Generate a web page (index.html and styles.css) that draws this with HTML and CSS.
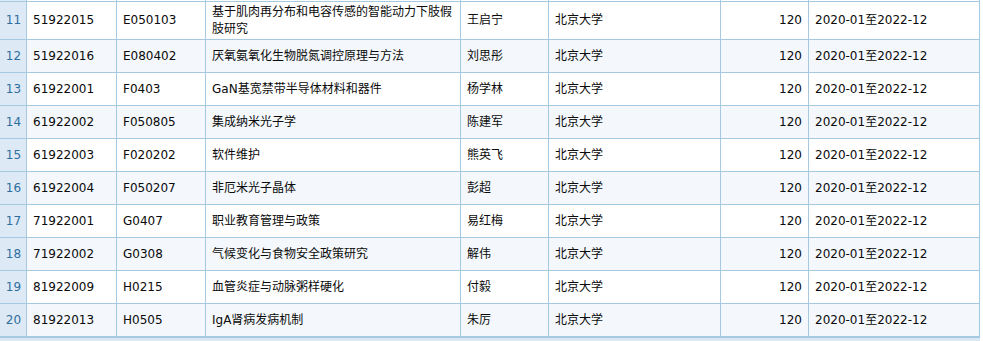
FILE: index.html
```html
<!DOCTYPE html>
<html lang="zh-CN">
<head>
<meta charset="utf-8">
<title>项目列表</title>
<link rel="stylesheet" href="styles.css">
</head>
<body>
<div class="grid">
<table class="tbl">
<colgroup>
<col class="c-rn"><col class="c-no"><col class="c-code"><col class="c-title"><col class="c-name"><col class="c-org"><col class="c-amt"><col class="c-date">
</colgroup>
<tbody>
<tr class="stub"><td class="rn"></td><td></td><td></td><td></td><td></td><td></td><td></td><td></td></tr>
<tr class="two"><td class="rn">11</td><td>51922015</td><td>E050103</td><td>基于肌肉再分布和电容传感的智能动力下肢假肢研究</td><td>王启宁</td><td>北京大学</td><td class="num">120</td><td>2020-01至2022-12</td></tr>
<tr class="alt"><td class="rn">12</td><td>51922016</td><td>E080402</td><td>厌氧氨氧化生物脱氮调控原理与方法</td><td>刘思彤</td><td>北京大学</td><td class="num">120</td><td>2020-01至2022-12</td></tr>
<tr><td class="rn">13</td><td>61922001</td><td>F0403</td><td>GaN基宽禁带半导体材料和器件</td><td>杨学林</td><td>北京大学</td><td class="num">120</td><td>2020-01至2022-12</td></tr>
<tr class="alt"><td class="rn">14</td><td>61922002</td><td>F050805</td><td>集成纳米光子学</td><td>陈建军</td><td>北京大学</td><td class="num">120</td><td>2020-01至2022-12</td></tr>
<tr><td class="rn">15</td><td>61922003</td><td>F020202</td><td>软件维护</td><td>熊英飞</td><td>北京大学</td><td class="num">120</td><td>2020-01至2022-12</td></tr>
<tr class="alt"><td class="rn">16</td><td>61922004</td><td>F050207</td><td>非厄米光子晶体</td><td>彭超</td><td>北京大学</td><td class="num">120</td><td>2020-01至2022-12</td></tr>
<tr><td class="rn">17</td><td>71922001</td><td>G0407</td><td>职业教育管理与政策</td><td>易红梅</td><td>北京大学</td><td class="num">120</td><td>2020-01至2022-12</td></tr>
<tr class="alt"><td class="rn">18</td><td>71922002</td><td>G0308</td><td>气候变化与食物安全政策研究</td><td>解伟</td><td>北京大学</td><td class="num">120</td><td>2020-01至2022-12</td></tr>
<tr><td class="rn">19</td><td>81922009</td><td>H0215</td><td>血管炎症与动脉粥样硬化</td><td>付毅</td><td>北京大学</td><td class="num">120</td><td>2020-01至2022-12</td></tr>
<tr class="alt"><td class="rn">20</td><td>81922013</td><td>H0505</td><td>IgA肾病发病机制</td><td>朱厉</td><td>北京大学</td><td class="num">120</td><td>2020-01至2022-12</td></tr>
</tbody>
</table>
<div class="pager"></div>
</div>
</body>
</html>
```

FILE: styles.css
```css
html, body {
  margin: 0;
  padding: 0;
  background: #ffffff;
}

.grid {
  width: 980px;
}

.tbl {
  width: 980px;
  table-layout: fixed;
  border-collapse: separate;
  border-spacing: 0;
  font-family: "DejaVu Sans", "Noto Sans CJK SC", sans-serif;
  font-size: 12px;
  color: #0a0a0a;
}

.c-rn { width: 27px; }
.c-no { width: 90px; }
.c-code { width: 89px; }
.c-title { width: 255px; }
.c-name { width: 88px; }
.c-org { width: 172px; }
.c-amt { width: 88px; }
.c-date { width: 171px; }

.tbl td {
  box-sizing: border-box;
  height: 33px;
  padding: 1px 5px 1px 6px;
  line-height: 17px;
  border-right: 1px solid #a6c9e2;
  border-bottom: 1px solid #a6c9e2;
  vertical-align: middle;
  white-space: normal;
  overflow: hidden;
  background: #ffffff;
}

.tbl tr.alt td {
  background: #f4f8fc;
}

.tbl td.rn {
  background: #dde9f5;
  color: #2e6e9e;
  text-align: center;
  padding: 1px 0 1px 1px;
}

.tbl tr.alt td.rn {
  background: #dde9f5;
}

.tbl td.num {
  text-align: right;
  padding-right: 6px;
}

.tbl tr.stub td {
  height: 2px;
  padding: 0;
  line-height: 0;
  font-size: 0;
}

.tbl tr.two td {
  height: 38px;
}

.pager {
  height: 4px;
  border-top: 1px solid #a6c9e2;
  background: #dbe8f4;
}
```
